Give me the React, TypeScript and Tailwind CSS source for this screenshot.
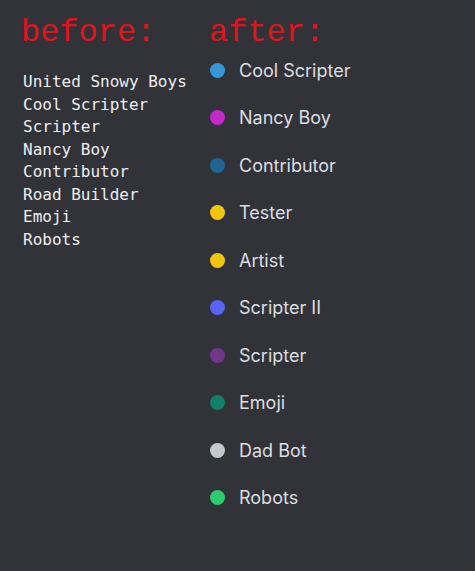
import React from "react";

const BEFORE = [
  "United Snowy Boys",
  "Cool Scripter",
  "Scripter",
  "Nancy Boy",
  "Contributor",
  "Road Builder",
  "Emoji",
  "Robots",
];

const AFTER = [
  { name: "Cool Scripter", color: "bg-[#3498db]" },
  { name: "Nancy Boy", color: "bg-[#c428c8]" },
  { name: "Contributor", color: "bg-[#206694]" },
  { name: "Tester", color: "bg-[#f1c40f]" },
  { name: "Artist", color: "bg-[#f1c40f]" },
  { name: "Scripter II", color: "bg-[#5865f2]" },
  { name: "Scripter", color: "bg-[#71368a]" },
  { name: "Emoji", color: "bg-[#11806a]" },
  { name: "Dad Bot", color: "bg-[#c4c9ce]" },
  { name: "Robots", color: "bg-[#2ecc71]" },
];

export default function App() {
  return (
    <div className="w-[475px] h-[571px] bg-[#313338] flex">
      {/* before column */}
      <div className="w-[209px] pl-[21px] pt-[13px]">
        <h2 className="font-['Liberation_Mono',monospace] text-[32px] leading-[40px] text-[#e0141e]">
          before:
        </h2>
        <ul className="mt-[18px] pl-[2px] font-['DejaVu_Sans_Mono',monospace] text-[16px] leading-[22.5px] text-[#eeeef0]">
          {BEFORE.map((r) => (
            <li key={r}>{r}</li>
          ))}
        </ul>
      </div>

      {/* after column */}
      <div className="pt-[13px]">
        <h2 className="font-['Liberation_Mono',monospace] text-[32px] leading-[40px] text-[#e0141e]">
          after:
        </h2>
        <ul className="mt-[5px] flex flex-col gap-[23.5px] font-['Inter',sans-serif] text-[18px] text-[#dbdee1]">
          {AFTER.map((r, i) => (
            <li key={i} className="flex items-center h-[24px]">
              <span className={`w-[15px] h-[15px] rounded-full ${r.color} ml-[1px] mr-[14px]`} />
              <span>{r.name}</span>
            </li>
          ))}
        </ul>
      </div>
    </div>
  );
}
